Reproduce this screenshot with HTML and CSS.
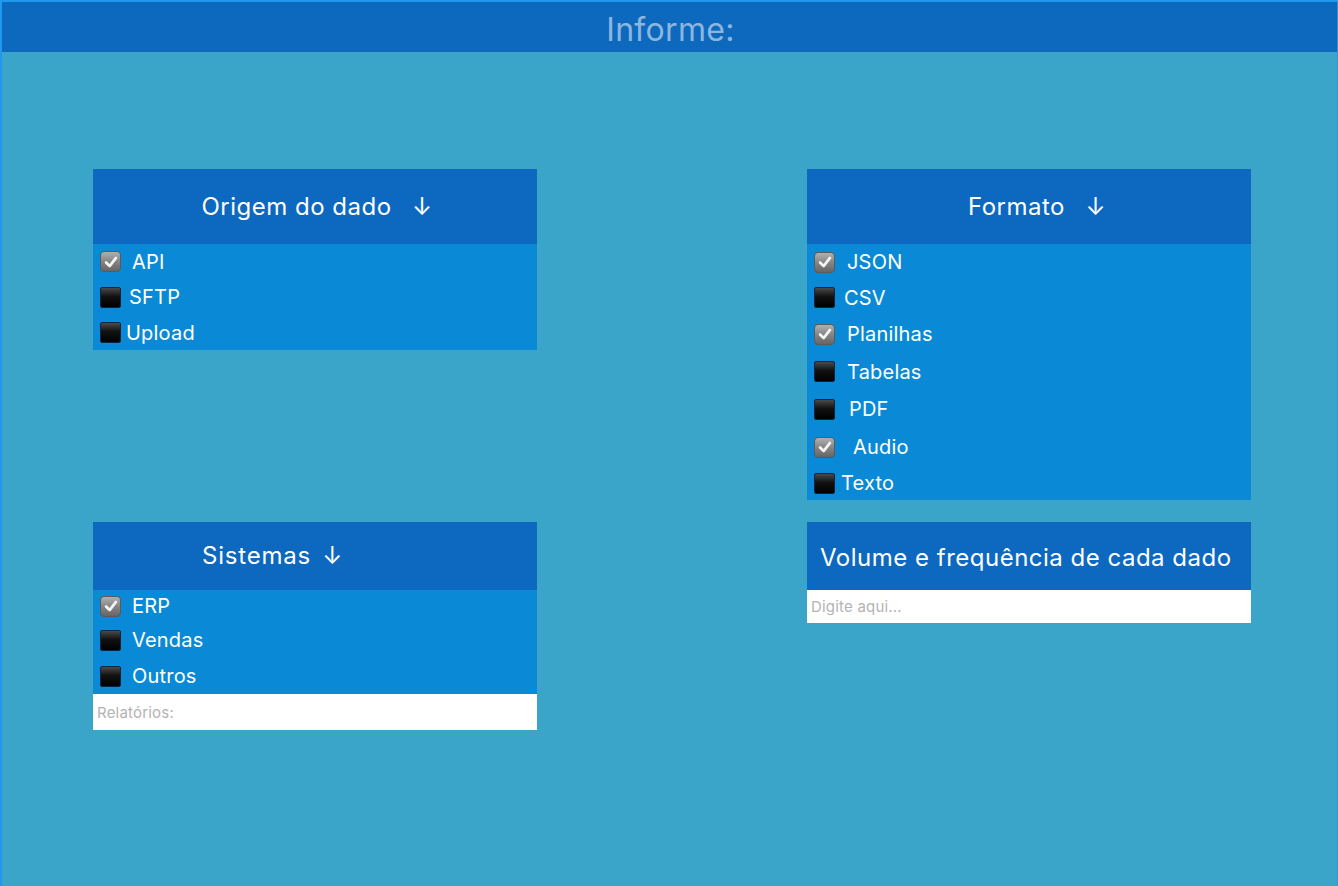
FILE: index.html
```html
<!DOCTYPE html>
<html lang="pt">
<head>
<meta charset="utf-8">
<title>Informe</title>
<link rel="stylesheet" href="styles.css">
</head>
<body>
<div class="frame">
  <header class="topbar">Informe:</header>
  <main class="grid">
    <section class="card">
      <div class="card-head center h75">Origem do dado&nbsp;&nbsp;<span class="arrow wide">↓</span></div>
      <ul class="list">
        <li class="row r35"><span class="box on"><svg viewBox="0 0 20 20"><path d="M4.5 10.5 L8.5 14.5 L15.5 5.5"/></svg></span><span class="lbl g12">API</span></li>
        <li class="row r36"><span class="box"></span><span class="lbl g9">SFTP</span></li>
        <li class="row r35"><span class="box"></span><span class="lbl g6">Upload</span></li>
      </ul>
    </section>
    <section class="card">
      <div class="card-head center h75 shift">Formato&nbsp;&nbsp;<span class="arrow wide">↓</span></div>
      <ul class="list">
        <li class="row r36"><span class="box on"><svg viewBox="0 0 20 20"><path d="M4.5 10.5 L8.5 14.5 L15.5 5.5"/></svg></span><span class="lbl g13">JSON</span></li>
        <li class="row r35"><span class="box"></span><span class="lbl g10">CSV</span></li>
        <li class="row r38"><span class="box on"><svg viewBox="0 0 20 20"><path d="M4.5 10.5 L8.5 14.5 L15.5 5.5"/></svg></span><span class="lbl g13">Planilhas</span></li>
        <li class="row r37"><span class="box"></span><span class="lbl g13">Tabelas</span></li>
        <li class="row r38"><span class="box"></span><span class="lbl g15">PDF</span></li>
        <li class="row r38"><span class="box on"><svg viewBox="0 0 20 20"><path d="M4.5 10.5 L8.5 14.5 L15.5 5.5"/></svg></span><span class="lbl g19">Audio</span></li>
        <li class="row r34"><span class="box"></span><span class="lbl g7">Texto</span></li>
      </ul>
    </section>
    <section class="card">
      <div class="card-head left-pad h68"><span class="sist">Sistemas</span>&nbsp;<span class="arrow mid">↓</span></div>
      <ul class="list">
        <li class="row r32"><span class="box on"><svg viewBox="0 0 20 20"><path d="M4.5 10.5 L8.5 14.5 L15.5 5.5"/></svg></span><span class="lbl g12">ERP</span></li>
        <li class="row r36"><span class="box"></span><span class="lbl g12">Vendas</span></li>
        <li class="row r36"><span class="box"></span><span class="lbl g12">Outros</span></li>
      </ul>
      <input class="field tall" type="text" placeholder="Relatórios:">
    </section>
    <section class="card">
      <div class="card-head vol h68">Volume e frequência de cada dado</div>
      <input class="field" type="text" placeholder="Digite aqui...">
    </section>
  </main>
</div>
</body>
</html>
```

FILE: styles.css
```css
* { box-sizing: border-box; }
html, body { margin: 0; padding: 0; }
body {
  font-family: Inter, "Noto Sans", "DejaVu Sans", sans-serif;
  background: #3aa5c9;
  overflow: hidden;
}
.frame {
  width: 1338px;
  height: 900px;
  border-top: 2px solid #1f98ee;
  border-left: 2px solid #1f98ee;
  border-right: 1px solid #1f98ee;
  background: #3aa5c9;
}
.topbar {
  height: 50px;
  background: #0d69be;
  color: #8db6df;
  font-size: 32px;
  letter-spacing: 0.3px;
  line-height: 50px;
  padding-top: 3px;
  text-align: center;
  padding-left: 2px;
}
.grid {
  display: grid;
  grid-template-columns: 444px 444px;
  column-gap: 270px;
  row-gap: 22px;
  padding: 117px 0 0 91px;
  align-items: start;
}
.card { display: flex; flex-direction: column; }
.card-head {
  background: #0d68bf;
  color: #ffffff;
  font-size: 24px;
  letter-spacing: 0.5px;
  display: flex;
  align-items: center;
}
.h75 { height: 75px; }
.h68 { height: 68px; }
.center { justify-content: center; padding-left: 4px; }
.shift { padding-left: 16px; }
.left-pad { padding-left: 109px; padding-bottom: 2px; }
.vol { padding-left: 13px; padding-top: 2px; }
.sist { letter-spacing: 0.8px; }
.arrow { font-size: 24px; }
.arrow.wide { margin-left: 6px; }
.arrow.mid { margin-left: 4px; }
.list {
  list-style: none;
  margin: 0;
  padding: 0;
  background: #0a8ad6;
}
.row {
  display: flex;
  align-items: center;
  padding-left: 7px;
  color: #ffffff;
  font-size: 20px;
  letter-spacing: 0.2px;
}
.r32 { height: 32px; }
.r34 { height: 34px; }
.r35 { height: 35px; }
.r36 { height: 36px; }
.r37 { height: 37px; }
.r38 { height: 38px; }
.box {
  width: 21px;
  height: 21px;
  flex: none;
  border-radius: 2px;
  border: 1px solid #0b2440;
  background: linear-gradient(#4a4a4a 0%, #111 45%, #000 100%);
  display: flex;
  align-items: center;
  justify-content: center;
}
.box.on {
  border-radius: 4px;
  border: 1px solid #5a5a5a;
  background: linear-gradient(#b0b0b0 0%, #858585 50%, #666 100%);
}
.box svg { width: 18px; height: 18px; }
.box svg path {
  fill: none;
  stroke: #f4f4f4;
  stroke-width: 3;
  stroke-linecap: round;
  stroke-linejoin: round;
}
.g6 { margin-left: 5px; }
.g7 { margin-left: 6px; }
.g9 { margin-left: 8px; }
.g10 { margin-left: 9px; }
.g12 { margin-left: 11px; }
.g13 { margin-left: 12px; }
.g15 { margin-left: 14px; }
.g19 { margin-left: 18px; }
.field {
  display: block;
  width: 100%;
  height: 33px;
  border: 0;
  margin: 0;
  padding: 0 4px;
  background: #ffffff;
  font-family: Inter, "Noto Sans", sans-serif;
  font-size: 15px;
  letter-spacing: 0.2px;
  color: #333;
  outline: none;
}
.field.tall { height: 36px; }
.field::placeholder { color: #b3b3b3; }
```
